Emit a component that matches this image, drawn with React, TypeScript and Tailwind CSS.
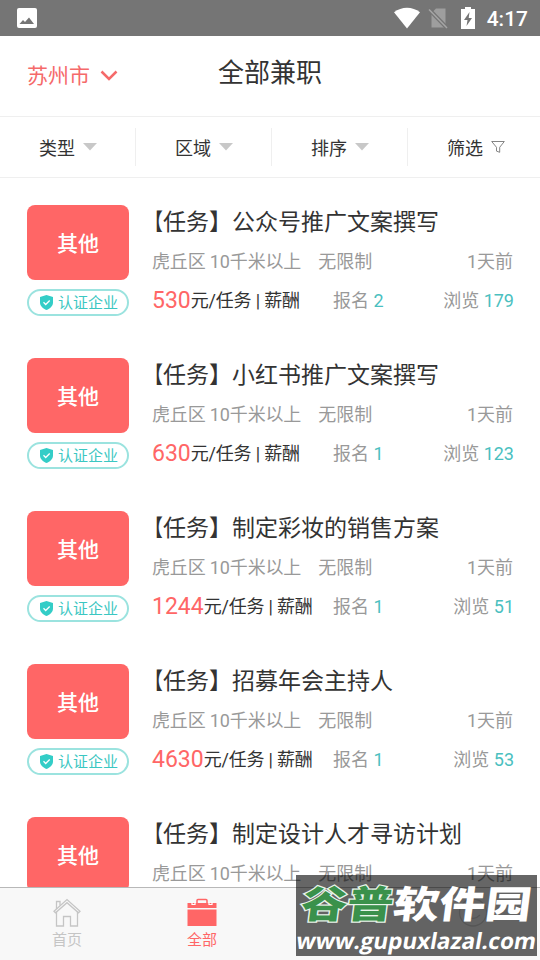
import { ReactNode } from 'react'

type Job = {
  title: string
  price: number
  applied: number
  views: number
}

const jobs: Job[] = [
  { title: '公众号推广文案撰写', price: 530, applied: 2, views: 179 },
  { title: '小红书推广文案撰写', price: 630, applied: 1, views: 123 },
  { title: '制定彩妆的销售方案', price: 1244, applied: 1, views: 51 },
  { title: '招募年会主持人', price: 4630, applied: 1, views: 53 },
  { title: '制定设计人才寻访计划', price: 2000, applied: 1, views: 48 },
]

function StatusBar() {
  return (
    <div className="flex h-9 shrink-0 items-center bg-[#757575] pl-[17px] pr-3 text-white">
      <svg width="20" height="20" viewBox="0 0 20 20" className="mr-auto">
        <rect width="20" height="20" rx="2" fill="#fff" />
        <path d="M2.500 16l3.500-4 2 2 4-4.500L17 16z" fill="#757575" />
      </svg>
      <svg width="28" height="22" viewBox="0 0 28 22">
        <path d="M1 5.200C8.500-.8 19.500-.8 27 5.200L14 21.500z" fill="#fff" />
      </svg>
      <svg width="21" height="22" viewBox="0 0 21 22" className="ml-[7px]">
        <path d="M8 1.500h9.500v19h-14V6z" fill="#9e9e9e" />
        <path d="M1 2.500l18 18.500" stroke="#757575" strokeWidth="4" />
        <path d="M1 2.500l18 18.500" stroke="#a6a6a6" strokeWidth="1.500" />
      </svg>
      <svg width="14" height="22" viewBox="0 0 14 22" className="ml-3">
        <path d="M4 0h6v2h4v20H0V2h4z" fill="#fff" />
        <path d="M8.500 5L3 13h3.500l-1 6L11 11H7.700z" fill="#757575" />
      </svg>
      <span className="ml-3 pt-px font-[Roboto] text-[21px] font-medium leading-9">4:17</span>
    </div>
  )
}

function Header() {
  return (
    <div className="relative flex h-[81px] shrink-0 items-center border-b border-[#efefef]">
      <div className="flex items-center pl-[27px] text-[21px] text-[#f56a6a]">
        <span className="pt-[2px]">苏州市</span>
        <svg width="18" height="12" viewBox="0 0 18 12" className="ml-[10px]">
          <path d="M1.500 1.500L9 9l7.500-7.500" fill="none" stroke="#f56a6a" strokeWidth="2.500" />
        </svg>
      </div>
      <h1 className="absolute inset-x-0 top-[18px] text-center text-[26px] leading-[38px] text-[#333]">全部兼职</h1>
    </div>
  )
}

function Caret() {
  return (
    <svg width="14" height="8" viewBox="0 0 14 8">
      <path d="M0 0h14L7 7.500z" fill="#c8c8c8" />
    </svg>
  )
}

function Filter({ label, icon }: { label: string; icon: ReactNode }) {
  return (
    <div className="flex h-[38px] w-[136px] shrink-0 items-center gap-2 border-r border-[#efefef] pl-[39px] text-lg text-[#333] last:border-r-0">
      <span className="pt-[3px] leading-7">{label}</span>
      {icon}
    </div>
  )
}

function Filters() {
  return (
    <div className="flex h-[61px] shrink-0 items-center overflow-hidden border-b border-[#efefef]">
      <Filter label="类型" icon={<Caret />} />
      <Filter label="区域" icon={<Caret />} />
      <Filter label="排序" icon={<Caret />} />
      <Filter
        label="筛选"
        icon={
          <svg width="14" height="14" viewBox="0 0 14 14" fill="none" stroke="#777" strokeWidth="0.9">
            <path d="M.7 1.500h12.600L8.700 7.300v5l-3.200-1.200V7.300z" />
          </svg>
        }
      />
    </div>
  )
}

function JobRow({ job }: { job: Job }) {
  return (
    <li className="flex h-[153px] shrink-0">
      <div className="w-[102px] shrink-0">
        <div className="flex h-[75px] items-center justify-center rounded-lg bg-[#ff6666] text-[21px] font-medium text-white">
          <span className="pt-[5px]">其他</span>
        </div>
        <div className="mt-[9px] flex h-[27px] items-center rounded-full border-2 border-[#9be3df] pl-[11px] text-[15px] text-[#3bc7c2]">
          <svg width="13" height="15" viewBox="0 0 13 15" className="mr-[5px]">
            <path d="M6.500 0L13 2v5.500c0 3.500-3 6-6.500 7.500C3 13.500 0 11 0 7.500V2z" fill="#33cdc7" />
            <path d="M3.500 7.300l2.200 2.200 4-4" fill="none" stroke="#fff" strokeWidth="1.300" />
          </svg>
          <span className="leading-5">认证企业</span>
        </div>
      </div>
      <div className="ml-[23px] min-w-0 grow pt-px">
        <div className="-ml-3 h-[34px] whitespace-nowrap text-[23px] leading-[34px] text-[#333]">
          <span className="inline-block origin-right scale-x-[0.8]">【</span>任务】{job.title}
        </div>
        <div className="mt-[9px] flex h-[26px] text-lg leading-[26px] text-[#999]">
          <span className="tracking-[-0.15px]">虎丘区 10千米以上</span>
          <span className="ml-[17px]">无限制</span>
          <span className="ml-auto mr-px">1天前</span>
        </div>
        <div className="mt-3 flex h-[26px] items-baseline text-lg leading-[26px] text-[#999]">
          <span className="min-w-[181px] whitespace-nowrap">
            <span className="inline-block translate-y-px text-[23px] text-[#ff6666]">{job.price}</span>
            <span className="tracking-[-0.2px] text-[#333]">元/任务 | 薪酬</span>
          </span>
          <span>
            报名 <span className="text-[#4bbfc0]">{job.applied}</span>
          </span>
          <span className="ml-auto">
            浏览 <span className="text-[#4bbfc0]">{job.views}</span>
          </span>
        </div>
      </div>
    </li>
  )
}

function TabBar() {
  return (
    <nav className="flex h-[73px] shrink-0 border-t border-[#b8b8b8] bg-[#f8f8f8] text-[15px]">
      <div className="flex w-[134px] flex-col items-center pt-[10px] text-[#c5c5c5]">
        <svg width="28" height="29" viewBox="0 0 28 29" fill="none" stroke="#c5c5c5" strokeWidth="1.300">
          <path d="M1 13.200L14 1.500l13 11.700-1.500 1.600L14 4.700 2.500 14.800z" />
          <path d="M3.500 13.800V28h7V18.500h7V28h7V13.800M3.500 11V3.500H7v4" />
        </svg>
        <span className="mt-[3px] leading-5">首页</span>
      </div>
      <div className="flex w-[136px] flex-col items-center pt-[10px] text-[#ff6666]">
        <svg width="30" height="29" viewBox="0 0 30 29">
          <path d="M10 6V2.500Q10 1.500 11 1.500h8q1 0 1 1V6" fill="none" stroke="#ff6666" strokeWidth="1.500" />
          <path d="M.5 5h29v5H.5zM.5 11.500h29V28H.5z" fill="#ff6666" />
          <path d="M5 4v2.500h3V4M22 4v2.500h3V4" fill="none" stroke="#fff" strokeWidth="1.200" />
        </svg>
        <span className="mt-[3px] leading-5">全部</span>
      </div>
      <div className="ml-[135px] flex w-[135px] flex-col items-center pt-[10px]">
        <svg width="30" height="29" viewBox="0 0 30 29" fill="none" stroke="#d5d5d5" strokeWidth="1.300">
          <circle cx="15" cy="14.500" r="13.500" />
          <path d="M8 17q7 7 14 0" />
        </svg>
      </div>
    </nav>
  )
}

function SiteBadge() {
  return (
    <div className="absolute bottom-[4px] right-[3px] h-[81px] w-[241px] bg-black/60">
      <div className="mt-[5px] flex -skew-x-6 scale-y-[0.82] justify-center whitespace-nowrap text-[46px] font-black leading-[50px] text-white">
        <span className="text-[#3a914b] [-webkit-text-stroke:3px_#e8f4ea] [paint-order:stroke_fill]">谷普</span>
        <span>软件园</span>
      </div>
      <div className="-mt-px -skew-x-[10deg] whitespace-nowrap text-center font-['Open_Sans'] text-[22.5px] font-bold leading-6 text-white">
        www.gupuxlazal.com
      </div>
    </div>
  )
}

export default function App() {
  return (
    <div className="relative flex h-[960px] w-[540px] flex-col overflow-hidden bg-white font-[Roboto,'Noto_Sans_CJK_SC',sans-serif]">
      <StatusBar />
      <Header />
      <Filters />
      <ul className="flex min-h-0 grow flex-col overflow-hidden pl-[27px] pr-[26px] pt-[27px]">
        {jobs.map(job => (
          <JobRow key={job.title} job={job} />
        ))}
      </ul>
      <TabBar />
      <SiteBadge />
    </div>
  )
}
